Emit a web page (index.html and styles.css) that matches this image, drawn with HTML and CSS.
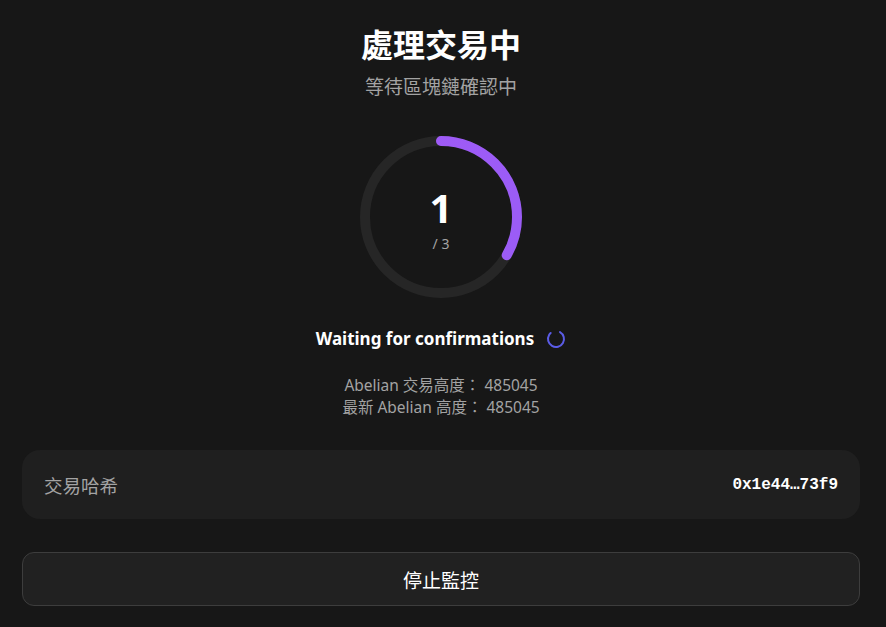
FILE: index.html
```html
<!DOCTYPE html>
<html lang="zh-Hant">
<head>
<meta charset="utf-8">
<link rel="stylesheet" href="styles.css">
</head>
<body>
<main class="page">
  <h1 class="title">處理交易中</h1>
  <p class="subtitle">等待區塊鏈確認中</p>
  <div class="ring">
    <svg width="170" height="170" viewBox="0 0 170 170">
      <defs>
        <linearGradient id="g" x1="0" y1="0" x2="0" y2="1">
          <stop offset="0" stop-color="#a259f7"/>
          <stop offset="1" stop-color="#9b5cf6"/>
        </linearGradient>
      </defs>
      <circle cx="85" cy="85" r="76" fill="none" stroke="#262626" stroke-width="10"/>
      <circle cx="85" cy="85" r="76" fill="none" stroke="url(#g)" stroke-width="10" stroke-linecap="round" stroke-dasharray="159.2 477.6" transform="rotate(-90 85 85)"/>
    </svg>
    <div class="ring-text">
      <span class="count">1</span>
      <span class="total">/ 3</span>
    </div>
  </div>
  <div class="status">
    <span>Waiting for confirmations</span>
    <svg class="spinner" width="20" height="20" viewBox="0 0 20 20">
      <circle cx="10" cy="10" r="8" fill="none" stroke="#5b5ce6" stroke-width="2" stroke-linecap="round" stroke-dasharray="40 11" transform="rotate(-60 10 10)"/>
    </svg>
  </div>
  <div class="heights">
    <div>Abelian 交易高度： 485045</div>
    <div>最新 Abelian 高度： 485045</div>
  </div>
  <div class="card">
    <span class="label">交易哈希</span>
    <span class="hash">0x1e44…73f9</span>
  </div>
  <button class="stop">停止監控</button>
</main>
</body>
</html>
```

FILE: styles.css
```css
html, body {
  margin: 0;
  padding: 0;
  background: #171717;
  font-family: "Noto Sans", "Noto Sans CJK TC", sans-serif;
  color: #fff;
}
.page {
  display: flex;
  flex-direction: column;
  align-items: center;
  padding: 23px 26px 0 22px;
}
.title {
  margin: 0;
  font-size: 32px;
  line-height: 40px;
  font-weight: 700;
  font-family: "Noto Sans CJK TC", sans-serif;
}
.subtitle {
  margin: 11px 0 0;
  font-size: 19px;
  line-height: 24px;
  color: #a3a3a3;
  font-family: "Noto Sans CJK TC", sans-serif;
}
.ring {
  position: relative;
  width: 170px;
  height: 170px;
  margin-top: 34px;
}
.ring svg { display: block; }
.ring-text {
  position: absolute;
  inset: 0;
  display: flex;
  flex-direction: column;
  align-items: center;
  justify-content: center;
  padding-top: 6px;
}
.count {
  font-size: 40px;
  line-height: 40px;
  font-weight: 700;
}
.total {
  margin-top: 8px;
  font-size: 14px;
  line-height: 16px;
  color: #a3a3a3;
}
.status {
  margin-top: 25px;
  display: flex;
  align-items: center;
  gap: 12px;
  font-size: 17px;
  line-height: 24px;
  font-weight: 700;
}
.spinner { display: block; }
.heights {
  margin-top: 23px;
  text-align: center;
  font-size: 15.5px;
  line-height: 22px;
  color: #a3a3a3;
}
.card {
  margin-top: 32px;
  align-self: stretch;
  height: 69px;
  box-sizing: border-box;
  background: #1f1f1f;
  border-radius: 18px;
  display: flex;
  align-items: center;
  justify-content: space-between;
  padding: 0 22px;
}
.label {
  font-size: 18.5px;
  color: #a3a3a3;
  font-family: "Noto Sans CJK TC", sans-serif;
}
.hash {
  font-family: "Liberation Mono", monospace;
  font-weight: 700;
  font-size: 16px;
}
.stop {
  margin-top: 33px;
  align-self: stretch;
  height: 54px;
  background: #212121;
  border: 1px solid #3d3d3d;
  border-radius: 12px;
  color: #fff;
  font-size: 19px;
  font-family: "Noto Sans CJK TC", sans-serif;
}
```
